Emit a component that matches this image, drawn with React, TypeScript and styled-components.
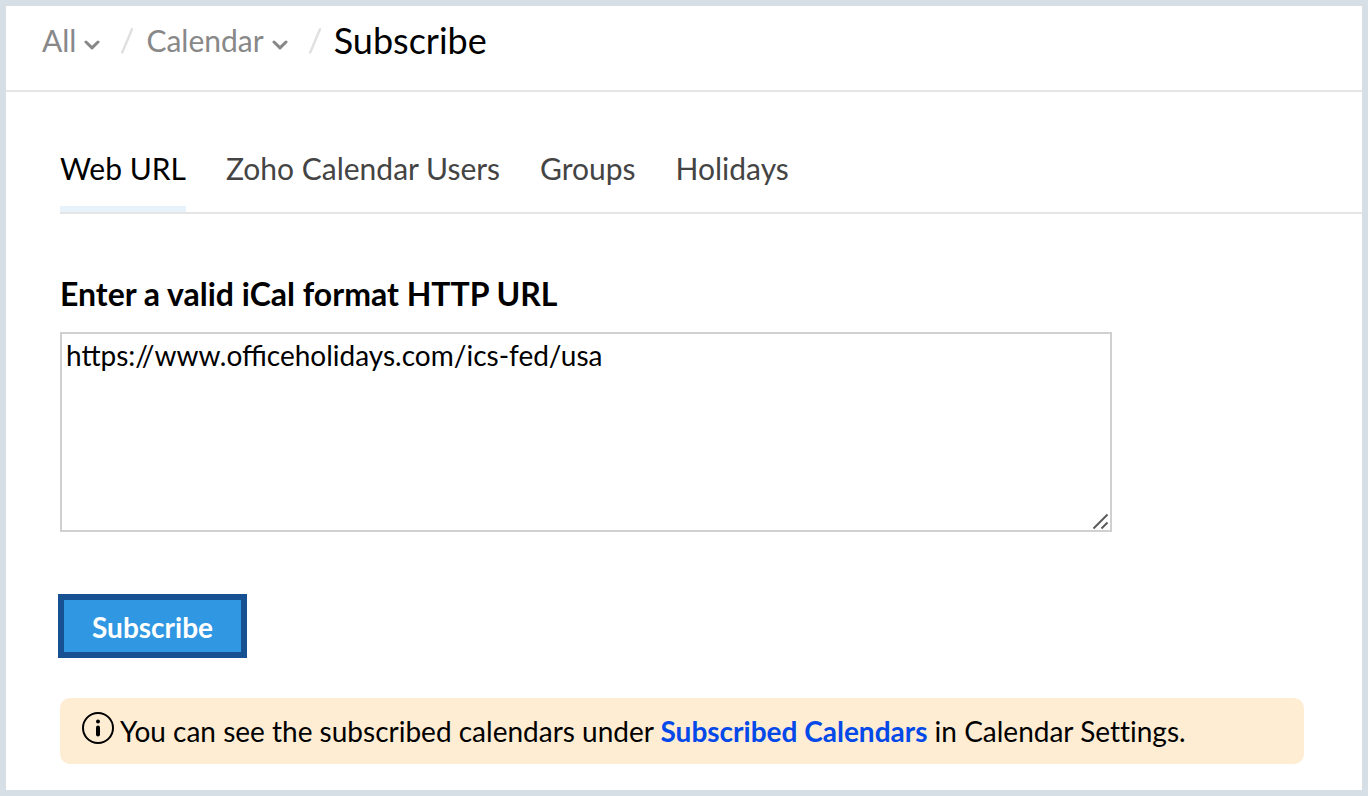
import React, { useState } from "react";
import styled, { createGlobalStyle } from "styled-components";

const GlobalStyle = createGlobalStyle`
  *, *::before, *::after { box-sizing: border-box; }
  body {
    margin: 0;
    background: #fff;
    color: #000;
    font-family: Lato, "Open Sans", sans-serif;
    font-size: 28px;
  }
  button, textarea { font: inherit; }
`;

const Frame = styled.div`
  min-height: 100vh;
  border: 6px solid #d6dfe5;
  background: #fff;
`;

const Header = styled.header`
  display: flex;
  align-items: center;
  height: 86px;
  padding: 0 36px 16px;
  border-bottom: 2px solid #e5e5e5;
`;

const Crumb = styled.button`
  display: flex;
  align-items: center;
  gap: 8px;
  padding: 0;
  border: 0;
  background: none;
  color: #888;
  font-size: 30px;
  line-height: 40px;
  cursor: pointer;
`;

const ChevronIcon = styled.svg`
  width: 16px;
  height: 10px;
  margin-top: 10px;
`;

const SlashIcon = styled.svg`
  flex: none;
  width: 12px;
  height: 26px;
  margin: 2px 13px 0 21px;
`;

const Title = styled.h1`
  margin: 0;
  font-size: 36px;
  font-weight: 400;
  line-height: 40px;
`;

const Main = styled.main`
  padding: 52px 0 26px 54px;
`;

const Tabs = styled.div`
  display: flex;
  gap: 40px;
  border-bottom: 2px solid #e5e5e5;
`;

const Tab = styled.button<{ $active: boolean }>`
  padding: 4px 0 18px;
  border: 0;
  border-bottom: 6px solid ${(p) => (p.$active ? "#e7f2fb" : "transparent")};
  background: none;
  color: ${(p) => (p.$active ? "#000" : "#444")};
  font-size: 30px;
  line-height: 40px;
  cursor: pointer;
`;

const Form = styled.form`
  padding: 60px 58px 0 0;
`;

const Label = styled.label`
  display: block;
  margin-bottom: 18px;
  font-size: 32px;
  font-weight: 700;
  line-height: 40px;
`;

const Field = styled.div`
  position: relative;
  max-width: 1052px;
`;

const UrlInput = styled.textarea`
  display: block;
  width: 100%;
  height: 200px;
  padding: 3px 4px;
  border: 2px solid #d0d0d0;
  outline: none;
  color: #000;
  background: #fff;
  line-height: 36px;
  resize: none;
`;

const Grip = styled.svg`
  position: absolute;
  right: 3px;
  bottom: 2px;
  width: 17px;
  height: 17px;
  pointer-events: none;
`;

const SubmitButton = styled.button`
  display: block;
  margin: 62px 0 40px -2px;
  padding: 9px 28px 7px;
  border: 6px solid #185192;
  background: #3098e2;
  color: #fff;
  font-weight: 700;
  line-height: 36px;
  cursor: pointer;
`;

const Notice = styled.p`
  display: flex;
  align-items: center;
  gap: 5px;
  margin: 0 58px 0 0;
  padding: 13px 21px;
  border-radius: 10px;
  background: #feedd3;
  line-height: 36px;
  font-variant-ligatures: none;
`;

const InfoIcon = styled.svg`
  flex: none;
  width: 34px;
  height: 34px;
  margin-bottom: 6px;
`;

const SettingsLink = styled.a`
  color: #0348e8;
  font-weight: 700;
  text-decoration: none;
`;

const tabNames = ["Web URL", "Zoho Calendar Users", "Groups", "Holidays"];

function Chevron() {
  return (
    <ChevronIcon viewBox="0 0 16 10" aria-hidden="true">
      <path d="M2 2l6 5.8L14 2" fill="none" stroke="#888" strokeWidth="3" strokeLinecap="round" strokeLinejoin="round" />
    </ChevronIcon>
  );
}

function Slash() {
  return (
    <SlashIcon viewBox="0 0 12 26" aria-hidden="true">
      <path d="M11 1.2L1.2 24.5" fill="none" stroke="#e0e0e0" strokeWidth="2.4" strokeLinecap="round" />
    </SlashIcon>
  );
}

export default function App() {
  const [activeTab, setActiveTab] = useState(tabNames[0]);
  const [url, setUrl] = useState("https://www.officeholidays.com/ics-fed/usa");

  return (
    <>
      <GlobalStyle />
      <Frame>
        <Header>
          <Crumb type="button">
            All
            <Chevron />
          </Crumb>
          <Slash />
          <Crumb type="button">
            Calendar
            <Chevron />
          </Crumb>
          <Slash />
          <Title>Subscribe</Title>
        </Header>
        <Main>
          <Tabs role="tablist">
            {tabNames.map((name) => (
              <Tab
                key={name}
                type="button"
                role="tab"
                aria-selected={name === activeTab}
                $active={name === activeTab}
                onClick={() => setActiveTab(name)}
              >
                {name}
              </Tab>
            ))}
          </Tabs>
          <Form onSubmit={(e) => e.preventDefault()}>
            <Label htmlFor="ical-url">Enter a valid iCal format HTTP URL</Label>
            <Field>
              <UrlInput id="ical-url" spellCheck={false} value={url} onChange={(e) => setUrl(e.target.value)} />
              <Grip viewBox="0 0 17 17" aria-hidden="true">
                <path d="M1.5 15.5L15.5 1.5M9.5 15.5L15.5 9.5" fill="none" stroke="#5c5c5c" strokeWidth="2" />
              </Grip>
            </Field>
            <SubmitButton type="submit">Subscribe</SubmitButton>
          </Form>
          <Notice>
            <InfoIcon viewBox="0 0 34 34" aria-hidden="true">
              <circle cx="17" cy="17" r="15" fill="none" stroke="#000" strokeWidth="2" />
              <circle cx="17" cy="10.5" r="2" />
              <path d="M17 16.5v7" stroke="#000" strokeWidth="4" strokeLinecap="round" />
            </InfoIcon>
            <span>
              You can see the subscribed calendars under <SettingsLink href="#calendars">Subscribed Calendars</SettingsLink> in
              Calendar Settings.
            </span>
          </Notice>
        </Main>
      </Frame>
    </>
  );
}
